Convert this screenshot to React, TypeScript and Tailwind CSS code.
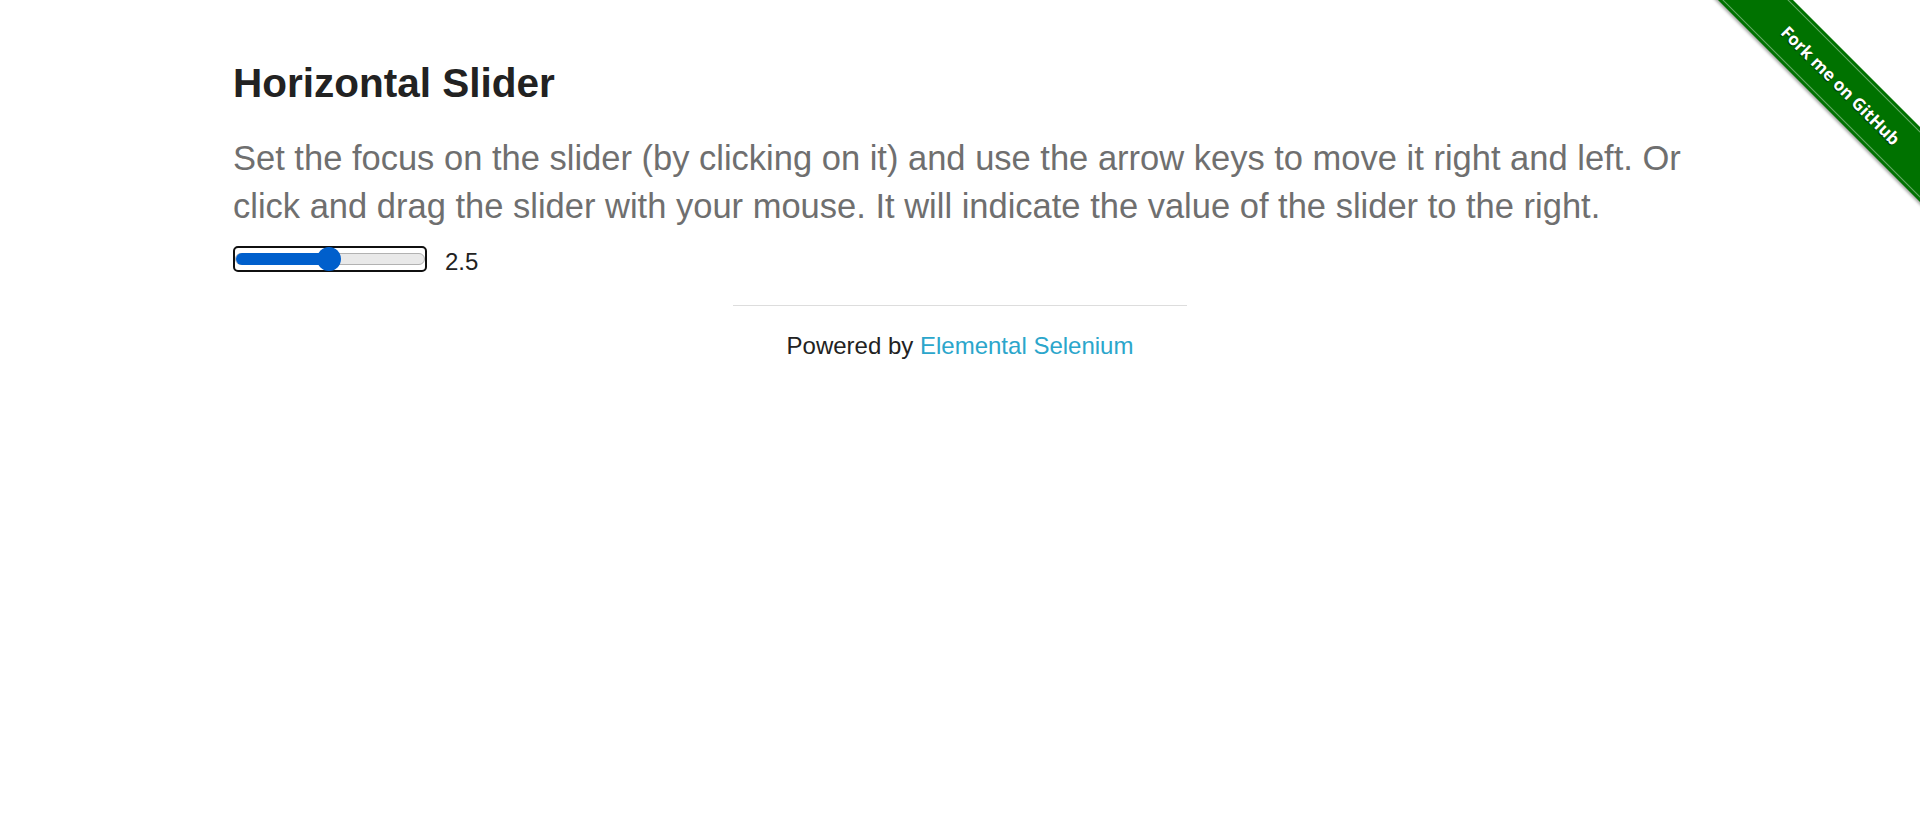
const value = 2.5;
const max = 5;

function Slider() {
    // filled part ends at the thumb centre
    const fill = Math.round((value / max) * 188);
    return (
        <div className="flex h-[26px] w-[194px] items-center rounded-[5px] border-2 border-[#101010]">
            <div className="flex h-[12px] flex-1 items-center rounded-full border border-[#b2b2b2] bg-[#e9e9e9]">
                <div className="h-[12px] shrink-0 rounded-full bg-[#005fcc]" style={{ width: fill + 3 }} />
                <div className="-ml-[16px] h-[24px] w-[24px] shrink-0 rounded-full bg-[#005fcc]" />
            </div>
        </div>
    );
}

function Ribbon() {
    return (
        <div className="pointer-events-none absolute right-0 top-0 h-[224px] w-[224px] overflow-hidden">
            <a
                href="#"
                className="absolute left-[-18px] top-[56px] flex h-[53px] w-[320px] rotate-45 items-center justify-center bg-[#007200] shadow-[0_2px_3px_rgba(0,0,0,0.35)]"
            >
                <span className="absolute inset-x-0 top-[3px] border-t border-white/40" />
                <span className="absolute inset-x-0 bottom-[3px] border-t border-white/40" />
                <span className="ml-[8px] font-['Open_Sans',sans-serif] text-[17px] font-bold text-white [text-shadow:0_1px_1px_rgba(0,0,0,0.6)]">
                    Fork me on GitHub
                </span>
            </a>
        </div>
    );
}

export default function App() {
    return (
        <div className="relative min-h-screen bg-white font-['Liberation_Sans',Arial,sans-serif]">
            <div className="mx-auto w-[1454px] pt-[59px]">
                <h3 className="text-[40.5px] font-bold leading-[48px] text-[#222222]">Horizontal Slider</h3>
                <h4 className="mt-[27px] text-[34.5px] leading-[48.3px] text-[#6f6f6f]">
                    Set the focus on the slider (by clicking on it) and use the arrow keys to move it right and left. Or
                    click and drag the slider with your mouse. It will indicate the value of the slider to the right.
                </h4>
                <div className="mt-[15px] flex h-[26px] items-center gap-[18px]">
                    <Slider />
                    <span className="mt-[6px] text-[24px] leading-none text-[#222222]">{value}</span>
                </div>
            </div>

            {/* footer */}
            <div className="mt-[33px]">
                <hr className="mx-auto w-[454px] border-0 border-t border-[#dddddd]" />
                <div className="mt-[22px] text-center text-[24px] leading-[36px] text-[#222222]">
                    Powered by{' '}
                    <a href="#" className="text-[#2ba6cb]">
                        Elemental Selenium
                    </a>
                </div>
            </div>

            <Ribbon />
        </div>
    );
}
